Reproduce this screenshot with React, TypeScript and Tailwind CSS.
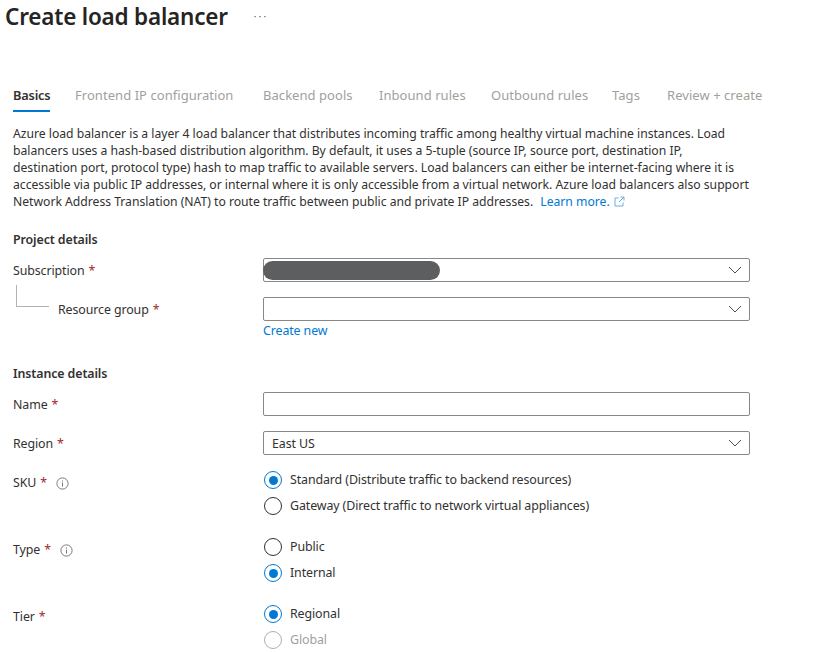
import React from "react";

const font = "font-['Noto_Sans','Open_Sans',sans-serif]";

function Star() {
  return <span className="text-[#a4262c] ml-[4px]">*</span>;
}

function Info() {
  return (
    <svg width="13" height="13" viewBox="0 0 13 13" className="ml-[9px] shrink-0" fill="none">
      <circle cx="6.5" cy="6.5" r="5.6" stroke="#7a7a7a" strokeWidth="1" />
      <rect x="6" y="5.6" width="1" height="4" fill="#7a7a7a" />
      <rect x="6" y="3.5" width="1" height="1.1" fill="#7a7a7a" />
    </svg>
  );
}

function Chevron() {
  return (
    <svg width="14" height="8" viewBox="0 0 14 8" fill="none" className="shrink-0">
      <path d="M1 1l6 6 6-6" stroke="#505050" strokeWidth="1" />
    </svg>
  );
}

function Select({ children }: { children?: React.ReactNode }) {
  return (
    <div className="relative h-[24px] w-[487px] border border-[#8a8886] rounded-[2px] flex items-center justify-between pl-[8px] pr-[7px] bg-white">
      <span className="pt-[2px] text-[12.4px] tracking-[-0.1px] text-[#323130]">{children}</span>
      <Chevron />
    </div>
  );
}

function Radio({ checked, disabled, label }: { checked?: boolean; disabled?: boolean; label: string }) {
  const ring = checked ? "border-[#0078d4]" : disabled ? "border-[#b0aeac]" : "border-[#323130]";
  return (
    <div className="flex items-center h-[26px]">
      <span className={`ml-[1px] w-[18px] h-[18px] rounded-full border-[1.3px] ${ring} flex items-center justify-center shrink-0`}>
        {checked && <span className="w-[9px] h-[9px] rounded-full bg-[#0078d4]" />}
      </span>
      <span className={`ml-[8px] text-[12.4px] tracking-[-0.1px] ${disabled ? "text-[#a19f9d]" : "text-[#323130]"}`}>{label}</span>
    </div>
  );
}

function Label({ children }: { children: React.ReactNode }) {
  return <div className="flex items-center w-[250px] shrink-0 text-[12.4px] tracking-[-0.1px] text-[#323130]">{children}</div>;
}

const tabs: [string, string][] = [
  ["Frontend IP configuration", "w-[188px]"],
  ["Backend pools", "w-[116px]"],
  ["Inbound rules", "w-[112px]"],
  ["Outbound rules", "w-[121px]"],
  ["Tags", "w-[55px]"],
  ["Review + create", "w-[110px]"],
];

export default function App() {
  return (
    <div className={`${font} w-[824px] h-[652px] overflow-hidden bg-white text-[#323130]`}>
      <div className="flex items-center h-[33px] pl-[5px]">
        <h1 className="text-[22.5px] leading-[32px] font-semibold tracking-[-0.2px] text-[#252423]">Create load balancer</h1>
        <svg width="12" height="3" viewBox="0 0 12 3" className="ml-[26px] -mt-[1px] shrink-0">
          <rect x="0.5" y="1" width="1.2" height="1.2" fill="#605e5c" />
          <rect x="5.4" y="1" width="1.2" height="1.2" fill="#605e5c" />
          <rect x="10.3" y="1" width="1.2" height="1.2" fill="#605e5c" />
        </svg>
      </div>

      <div className="flex items-start mt-[52px] ml-[13px] h-[27px]">
        <div className="w-[62px]">
          <div className="w-fit h-[27px] leading-[20px] border-b-[2px] border-[#0078d4] text-[12.8px] font-semibold tracking-[-0.2px] text-[#323130]">Basics</div>
        </div>
        {tabs.map(([t, w]) => (
          <div key={t} className={`${w} leading-[20px] text-[13px] tracking-[0.05px] text-[#a19f9d]`}>{t}</div>
        ))}
      </div>

      <p className="mt-[13px] ml-[13px] w-[800px] text-[12.2px] leading-[17px] tracking-[-0.02px] text-[#323130]">
        Azure load balancer is a layer 4 load balancer that distributes incoming traffic among healthy virtual machine instances. Load<br />
        balancers uses a hash-based distribution algorithm. By default, it uses a 5-tuple (source IP, source port, destination IP,<br />
        destination port, protocol type) hash to map traffic to available servers. Load balancers can either be internet-facing where it is<br />
        accessible via public IP addresses, or internal where it is only accessible from a virtual network. Azure load balancers also support<br />
        Network Address Translation (NAT) to route traffic between public and private IP addresses.{" "}
        <span className="ml-[4px] text-[#0078d4]">Learn more.</span>
        <svg width="11" height="11" viewBox="0 0 11 11" fill="none" className="inline-block ml-[4px] align-[-0.5px]">
          <path d="M4.5 2H1v8h8V6.5M6.5 1H10v3.5M10 1L5 6" stroke="#5ea6de" strokeWidth="0.9" />
        </svg>
      </p>

      <div className="ml-[13px]">
        <h2 className="mt-[21px] text-[12.4px] leading-[18px] font-semibold tracking-[-0.1px]">Project details</h2>

        <div className="mt-[9px] flex items-center h-[24px]">
          <div className="pt-[2px]"><Label>Subscription<Star /></Label></div>
          <div className="relative">
            <Select />
            <div className="absolute left-0 top-[3px] w-[177px] h-[19px] rounded-full bg-[#5d5e60]" />
          </div>
        </div>

        <div className="mt-[15px] flex items-center h-[24px]">
          <div className="flex items-center w-[250px] shrink-0">
            <div className="ml-[3px] -mt-[26px] w-[33px] h-[22px] border-l border-b border-[#b3b3b3] shrink-0" />
            <div className="ml-[9px] mt-[2px] text-[12.4px] tracking-[-0.1px]">Resource group<Star /></div>
          </div>
          <Select />
        </div>

        <div className="ml-[250px] mt-[1px] h-[18px] text-[12.4px] leading-[18px] tracking-[-0.1px] text-[#0078d4]">Create new</div>

        <h2 className="mt-[25px] text-[12.4px] leading-[18px] font-semibold tracking-[-0.1px]">Instance details</h2>

        <div className="mt-[9px] flex items-center h-[24px]">
          <div className="pt-[2px]"><Label>Name<Star /></Label></div>
          <div className="h-[24px] w-[487px] border border-[#8a8886] rounded-[2px]" />
        </div>

        <div className="mt-[15px] flex items-center h-[24px]">
          <div className="pt-[2px]"><Label>Region<Star /></Label></div>
          <Select>East US</Select>
        </div>

        <div className="mt-[12px] flex items-start">
          <div className="pt-[7px]"><Label>SKU<Star /><Info /></Label></div>
          <div>
            <Radio checked label="Standard (Distribute traffic to backend resources)" />
            <Radio label="Gateway (Direct traffic to network virtual appliances)" />
          </div>
        </div>

        <div className="mt-[15px] flex items-start">
          <div className="pt-[7px]"><Label>Type<Star /><Info /></Label></div>
          <div>
            <Radio label="Public" />
            <Radio checked label="Internal" />
          </div>
        </div>

        <div className="mt-[15px] flex items-start">
          <div className="pt-[7px]"><Label>Tier<Star /></Label></div>
          <div>
            <Radio checked label="Regional" />
            <Radio disabled label="Global" />
          </div>
        </div>
      </div>
    </div>
  );
}
